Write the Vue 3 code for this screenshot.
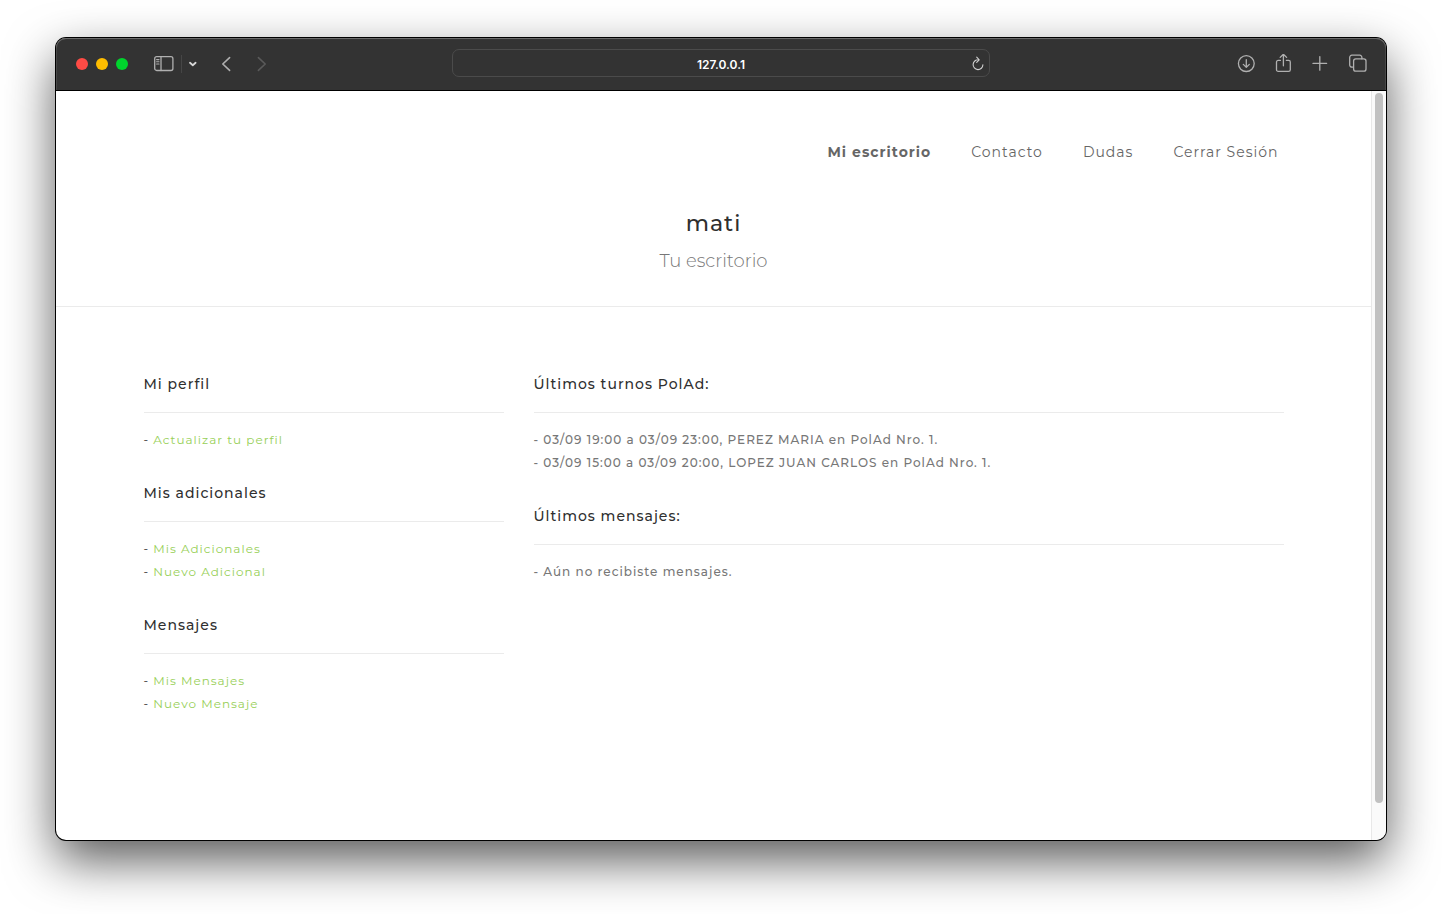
<script setup>
import { ref } from 'vue'

const address = ref('127.0.0.1')

const nav = [
  { label: 'Mi escritorio', active: true },
  { label: 'Contacto' },
  { label: 'Dudas' },
  { label: 'Cerrar Sesión' },
]

const menus = [
  { title: 'Mi perfil', links: ['Actualizar tu perfil'] },
  { title: 'Mis adicionales', links: ['Mis Adicionales', 'Nuevo Adicional'] },
  { title: 'Mensajes', links: ['Mis Mensajes', 'Nuevo Mensaje'] },
]

const feeds = [
  {
    title: 'Últimos turnos PolAd:',
    items: [
      '03/09 19:00 a 03/09 23:00, PEREZ MARIA en PolAd Nro. 1.',
      '03/09 15:00 a 03/09 20:00, LOPEZ JUAN CARLOS en PolAd Nro. 1.',
    ],
  },
  { title: 'Últimos mensajes:', items: ['Aún no recibiste mensajes.'] },
]
</script>

<template>
  <div class="desktop">
    <div class="window">
      <div class="toolbar">
        <div class="tools-left">
          <div class="lights">
            <button class="light red" aria-label="Cerrar"></button>
            <button class="light yellow" aria-label="Minimizar"></button>
            <button class="light green" aria-label="Ampliar"></button>
          </div>
          <div class="side-tools">
            <button class="tool" aria-label="Barra lateral">
              <svg width="20" height="20" viewBox="0 0 20 20">
                <rect x="0.7" y="2.7" width="18.2" height="13.8" rx="2" />
                <path d="M7 2.7v13.8" />
                <path class="thin" d="M2.6 5.6h2.4M2.6 7.8h2.4M2.6 10h2.4" />
              </svg>
            </button>
            <span class="divider"></span>
            <button class="tool" aria-label="Grupos de pestañas">
              <svg width="8" height="20" viewBox="0 0 8 20">
                <path class="bold" d="M1 8.8l2.8 2.4 2.8-2.4" />
              </svg>
            </button>
          </div>
          <div class="history">
            <button class="tool" aria-label="Atrás">
              <svg width="10" height="20" viewBox="0 0 10 20">
                <path class="arrow" d="M8.6 3.6L1.8 10l6.8 6.4" />
              </svg>
            </button>
            <button class="tool dim" aria-label="Adelante">
              <svg width="10" height="20" viewBox="0 0 10 20">
                <path class="arrow" d="M1.4 3.6L8.2 10l-6.8 6.4" />
              </svg>
            </button>
          </div>
        </div>

        <div class="address">
          <input v-model="address" type="text" aria-label="Dirección" />
          <button class="tool reload" aria-label="Recargar">
            <svg width="12" height="16" viewBox="0 0 12 16">
              <path class="thin" d="M6.4 3.8A4.9 4.9 0 1 0 10.9 8.8M4.7 1.2L7.2 3.9 4.7 6.4" />
            </svg>
          </button>
        </div>

        <div class="tools-right">
          <button class="tool" aria-label="Descargas">
            <svg width="20" height="20" viewBox="0 0 20 20">
              <circle cx="9.3" cy="9.6" r="7.9" />
              <path d="M9.3 5.6v7.6M6.3 10.4l3 3 3-3" />
            </svg>
          </button>
          <button class="tool" aria-label="Compartir">
            <svg width="20" height="20" viewBox="0 0 20 20">
              <path d="M6.4 6.4H4.2a1.7 1.7 0 0 0-1.7 1.7v7.6a1.7 1.7 0 0 0 1.7 1.7h10.4a1.7 1.7 0 0 0 1.7-1.7V8.1a1.7 1.7 0 0 0-1.7-1.7h-2.2M9.4 11.8V0.4M6.2 3.4l3.2-3.2 3.2 3.2" />
            </svg>
          </button>
          <button class="tool" aria-label="Nueva pestaña">
            <svg width="20" height="20" viewBox="0 0 20 20">
              <path d="M8.8 2.6v13.6M2 9.4h13.6" />
            </svg>
          </button>
          <button class="tool" aria-label="Vista de pestañas">
            <svg width="20" height="20" viewBox="0 0 20 20">
              <path d="M5.4 13.2H3.9a2.2 2.2 0 0 1-2.2-2.2V3.4a2.2 2.2 0 0 1 2.2-2.2h7.8a2.2 2.2 0 0 1 2.2 2.2v1.4" />
              <rect x="5.6" y="4.8" width="12.4" height="12.4" rx="2.2" />
            </svg>
          </button>
        </div>
      </div>

      <div class="viewport">
        <div class="page">
          <header class="header">
            <div class="container">
              <nav class="nav">
                <a v-for="n in nav" :key="n.label" href="#" :class="{ active: n.active }">{{ n.label }}</a>
              </nav>
              <h1>mati</h1>
              <p class="subtitle">Tu escritorio</p>
            </div>
          </header>
          <main class="container columns">
            <div>
              <section v-for="m in menus" :key="m.title">
                <h2>{{ m.title }}</h2>
                <ul class="links">
                  <li v-for="l in m.links" :key="l">- <a href="#">{{ l }}</a></li>
                </ul>
              </section>
            </div>
            <div>
              <section v-for="f in feeds" :key="f.title">
                <h2>{{ f.title }}</h2>
                <ul class="feed">
                  <li v-for="i in f.items" :key="i">- {{ i }}</li>
                </ul>
              </section>
            </div>
          </main>
        </div>
        <div class="scrollbar"><div class="thumb"></div></div>
      </div>
    </div>
  </div>
</template>

<style>
body {
  margin: 0;
  background: #fff;
}
</style>

<style scoped>
* {
  box-sizing: border-box;
}
.desktop {
  display: flex;
  min-height: 100vh;
  padding: 38px 56px 74px;
  overflow: hidden;
  font-family: Montserrat, Inter, "Open Sans", sans-serif;
}
.window {
  display: flex;
  flex-direction: column;
  flex: 1;
  min-width: 0;
  border-radius: 10px;
  background: #fff;
  box-shadow: 0 0 0 1px #000, 0 20px 50px rgba(0, 0, 0, 0.66);
}
.toolbar {
  display: grid;
  grid-template-columns: 1fr 41.6% 1fr;
  align-items: center;
  height: 53px;
  padding: 0 18px;
  border-bottom: 1px solid #000;
  border-radius: 10px 10px 0 0;
  background: #333;
  box-shadow: inset 0 1px #6a6a6a, inset 1px 0 #484848, inset -1px 0 #484848;
}
.tools-left,
.side-tools,
.history,
.lights {
  display: flex;
  align-items: center;
}
.tools-left {
  gap: 24px;
}
.lights {
  gap: 8px;
  padding: 0 2px;
}
.light {
  width: 12px;
  height: 12px;
  padding: 0;
  border: 0;
  border-radius: 50%;
}
.red {
  background: #ff4b45;
}
.yellow {
  background: #ffbd00;
}
.green {
  background: #00d42d;
}
.side-tools {
  gap: 7px;
}
.history {
  gap: 26px;
}
.divider {
  width: 1px;
  height: 18px;
  background: #464646;
}
.tool {
  display: flex;
  padding: 0;
  border: 0;
  background: none;
  color: #b0b0b0;
}
.tool.dim {
  color: #5a5a5a;
}
.tool svg {
  fill: none;
  stroke: currentColor;
  stroke-width: 1.3;
  stroke-linecap: round;
  stroke-linejoin: round;
}
.tool .thin {
  stroke-width: 1.1;
}
.tool .bold {
  stroke: #d8d8d8;
  stroke-width: 1.8;
}
.tool .arrow {
  stroke-width: 1.6;
}
.address {
  position: relative;
  margin-bottom: 2px;
}
.address input {
  display: block;
  width: 100%;
  height: 28px;
  padding: 2px 24px 0;
  border: 1px solid #4b4b4b;
  border-radius: 7px;
  outline: 0;
  background: transparent;
  color: #fff;
  font: 600 12px/20px Inter, sans-serif;
  text-align: center;
}
.reload {
  position: absolute;
  top: 7px;
  right: 6px;
  color: #d0d0d0;
}
.tools-right {
  display: flex;
  justify-content: flex-end;
  gap: 17px;
}
.viewport {
  display: flex;
  flex: 1;
}
.page {
  flex: 1;
  min-width: 0;
}
.scrollbar {
  width: 15px;
  padding: 2px 3px 0;
  border-left: 1px solid #e8e8e8;
  border-radius: 0 0 10px 0;
  background: #fafafa;
}
.thumb {
  width: 8px;
  height: 95%;
  border-radius: 4px;
  background: #c1c1c1;
}
.container {
  max-width: 1170px;
  margin: 0 auto;
  padding: 0 15px;
}
.header {
  padding: 49px 0 32px;
  border-bottom: 1px solid #ebebeb;
  text-align: center;
}
.nav {
  display: flex;
  justify-content: flex-end;
  gap: 40px;
  padding-right: 5px;
  font-size: 14px;
  line-height: 24px;
  letter-spacing: 1px;
}
.nav a {
  color: #666;
  text-decoration: none;
}
.nav .active {
  font-weight: 700;
}
h1 {
  margin: 45px 0 9px;
  color: #2f2f2f;
  font-size: 22px;
  font-weight: 500;
  line-height: 30px;
  letter-spacing: 1px;
}
.subtitle {
  margin: 0;
  color: #777;
  font-size: 18px;
  font-weight: 300;
  line-height: 26px;
}
.columns {
  display: grid;
  grid-template-columns: 360fr 750fr;
  gap: 30px;
  padding-top: 65px;
  padding-bottom: 60px;
}
section {
  margin-bottom: 30px;
}
h2 {
  margin: 0 0 15px;
  padding-bottom: 16px;
  border-bottom: 1px solid #ebebeb;
  color: #2f2f2f;
  font-size: 14px;
  font-weight: 500;
  line-height: 24px;
  letter-spacing: 1px;
}
ul {
  margin: 0;
  padding: 0;
  list-style: none;
  font-size: 12px;
  line-height: 23px;
  letter-spacing: 1px;
}
.links {
  color: #222;
}
.links a {
  color: #97cf57;
  text-decoration: none;
}
.feed {
  color: #777;
  font-weight: 500;
}
</style>
